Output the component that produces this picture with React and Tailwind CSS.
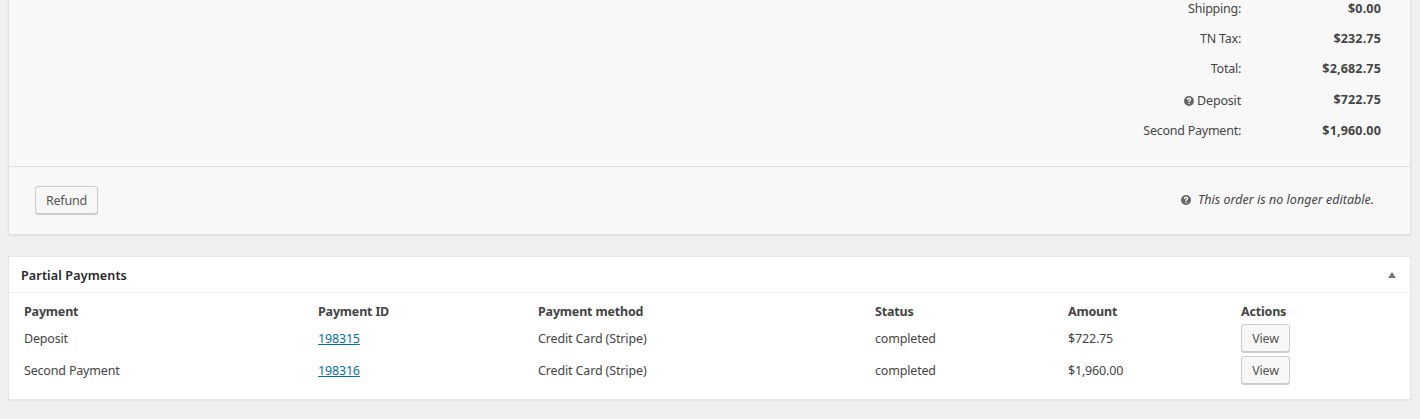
const totals = [
  { label: 'Shipping:', value: '$0.00', row: 'h-[23px] pb-1' },
  { label: 'TN Tax:', value: '$232.75', row: 'h-[30px] pt-[3px]' },
  { label: 'Total:', value: '$2,682.75', row: 'h-[30px] pt-[3px]' },
  { label: 'Deposit', value: '$722.75', row: 'h-8 pt-[3px]', help: true },
  { label: 'Second Payment:', value: '$1,960.00', row: 'h-[31px] pt-0.5' },
];

function Help({ className }) {
  return (
    <svg className={className} width="10" height="10" viewBox="0 0 10 10">
      <circle cx="5" cy="5" r="5" fill="#666" />
      <path d="M3.4 3.9Q3.5 2.3 5 2.3T6.6 3.7Q6.6 4.4 5 5.2V6.1" fill="none" stroke="#f8f8f8" strokeWidth="1.4" />
      <rect x="4.3" y="6.8" width="1.4" height="1.3" fill="#f8f8f8" />
    </svg>
  );
}

function Button({ children, className }) {
  return (
    <button className={`box-border h-7 rounded-[3px] border border-[#ccc] bg-[#f7f7f7] pt-0.5 text-[12.5px] leading-[24px] tracking-[-0.18px] text-[#555] shadow-[0_1px_0_#ccc] ${className}`}>
      {children}
    </button>
  );
}

const rows = [
  ['Deposit', '198315', '$722.75'],
  ['Second Payment', '198316', '$1,960.00'],
];
const cols = 'grid grid-cols-[294px_220px_337px_193px_173px_1fr] items-center pl-[15px]';

export default function App() {
  return (
    <div className="h-[419px] w-[1420px] overflow-hidden bg-[#f0f0f0] px-2 font-['Noto_Sans',sans-serif] text-[12.5px] tracking-[-0.18px] text-[#444]">
      <section className="h-[235px] w-[1403px] border border-t-0 border-[#e1e1e1] bg-[#f8f8f8] shadow-[0_1px_2px_rgba(0,0,0,0.08)]">
        <div className="h-[167px] border-b border-[#dfdfdf]">
          <div className="flex flex-col items-end pr-[29px]">
            {totals.map(({ label, value, row, help }) => (
              <div key={label} className={`flex items-center ${row}`}>
                <span className={help ? 'flex items-center pt-0.5 tracking-[-0.18px]' : 'flex items-center tracking-[-0.25px]'}>
                  {help && <Help className="mr-[3px] mb-px" />}
                  {label}
                </span>
                <b className="w-[140px] text-right tracking-[0.17px]">{value}</b>
              </div>
            ))}
          </div>
        </div>
        <div className="flex h-[67px] items-center justify-between pr-9 pb-0.5 pl-[26px]">
          <Button className="w-[63px]">Refund</Button>
          <span className="flex items-center pt-0.5 tracking-[0.02px] italic"><Help className="mr-[7px] mb-0.5" />This order is no longer editable.</span>
        </div>
      </section>
      <section className="mt-[21px] h-[144px] w-[1403px] border border-[#e5e5e5] bg-white shadow-[0_1px_1px_rgba(0,0,0,0.04)]">
        <div className="flex h-9 items-center justify-between border-b border-[#eee] pr-[14px] pl-3">
          <h2 className="pt-[3px] font-semibold tracking-[0.15px] text-[#23282d]">Partial Payments</h2>
          <svg className="mt-0.5" width="8" height="7" viewBox="0 0 8 7"><path d="M4 0L8 6H0Z" fill="#72777c" /></svg>
        </div>
        <div className={`${cols} h-[29px] pt-[9px] font-bold`}>
          <span>Payment</span><span>Payment ID</span><span>Payment method</span><span>Status</span><span>Amount</span><span>Actions</span>
        </div>
        {rows.map(([name, id, amount]) => (
          <div key={id} className={`${cols} h-8`}>
            <span className="pt-0.5">{name}</span><a className="pt-0.5 text-[#0073aa] underline">{id}</a><span className="pt-0.5 tracking-[-0.14px]">Credit Card (Stripe)</span><span className="pt-0.5">completed</span><span className="pt-0.5">{amount}</span><Button className="w-[49px]">View</Button>
          </div>
        ))}
      </section>
    </div>
  );
}
